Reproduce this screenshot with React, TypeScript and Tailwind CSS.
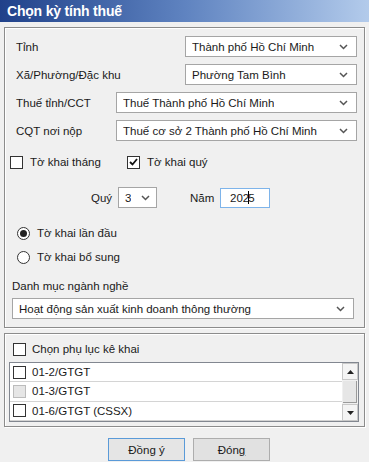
import type { ReactNode } from "react";

const FONT = { fontFamily: '"Liberation Sans", Arial, sans-serif' };

function Chevron() {
  return (
    <svg width="9" height="6" viewBox="0 0 9 6" className="shrink-0">
      <path d="M1 1 L4.5 4.5 L8 1" fill="none" stroke="#555" strokeWidth="1.5" />
    </svg>
  );
}

// Windows-style combo box: white field, thin gray frame, chevron on the right.
function Combo({ value, className = "" }: { value: string; className?: string }) {
  return (
    <div
      className={`flex h-[21px] items-center justify-between border border-[#a5a5a5] bg-white pl-[6px] pr-[8px] text-[#1a1a1a] ${className}`}
    >
      <span className="truncate">{value}</span>
      <Chevron />
    </div>
  );
}

function CheckBox({ checked = false, disabled = false }: { checked?: boolean; disabled?: boolean }) {
  return (
    <span
      className={`flex h-[13px] w-[13px] shrink-0 items-center justify-center border ${
        disabled ? "border-[#bcbcbc] bg-[#e6e6e6]" : "border-[#333] bg-white"
      }`}
    >
      {checked && (
        <svg width="9" height="8" viewBox="0 0 9 8">
          <path d="M1 4 L3.5 6.5 L8 1" fill="none" stroke="#111" strokeWidth="1.8" />
        </svg>
      )}
    </span>
  );
}

function Radio({ checked = false }: { checked?: boolean }) {
  return (
    <span className="flex h-[13px] w-[13px] shrink-0 items-center justify-center rounded-full border border-[#333] bg-white">
      {checked && <span className="h-[7px] w-[7px] rounded-full bg-[#222]" />}
    </span>
  );
}

function GroupBox({ children, className = "" }: { children: ReactNode; className?: string }) {
  return (
    <div className={`border border-[#8c8c8c] shadow-[1px_1px_0_#fff,inset_1px_1px_0_#fff] ${className}`}>
      {children}
    </div>
  );
}

const phuLuc = [
  { name: "01-2/GTGT", disabled: false },
  { name: "01-3/GTGT", disabled: true },
  { name: "01-6/GTGT (CSSX)", disabled: false },
];

export default function App() {
  return (
    <div
      className="h-[462px] w-[369px] overflow-hidden bg-[#f0f0f0] text-[11.5px] leading-[14px] text-[#1a1a1a]"
      style={FONT}
    >
      {/* title bar */}
      <div className="flex h-[22px] items-center bg-gradient-to-r from-[#20418a] via-[#5f83c0] to-[#b3cbeb] pl-[7px]">
        <span className="text-[14px] font-bold tracking-[-0.2px] text-white">Chọn kỳ tính thuế</span>
      </div>

      <div className="px-[4px] pt-[5px]">
        {/* --- kỳ tính thuế --- */}
        <GroupBox className="pb-[8px] pt-[8px]">
          <div className="flex items-center pl-[11px] pr-[7px]">
            <span className="flex-1">Tỉnh</span>
            <Combo value="Thành phố Hồ Chí Minh" className="w-[172px]" />
          </div>
          <div className="mt-[7px] flex items-center pl-[11px] pr-[7px]">
            <span className="flex-1">Xã/Phường/Đặc khu</span>
            <Combo value="Phường Tam Bình" className="w-[172px]" />
          </div>
          <div className="mt-[7px] flex items-center pl-[11px] pr-[7px]">
            <span className="w-[100px]">Thuế tỉnh/CCT</span>
            <Combo value="Thuế Thành phố Hồ Chí Minh" className="flex-1" />
          </div>
          <div className="mt-[7px] flex items-center pl-[11px] pr-[7px]">
            <span className="w-[100px]">CQT nơi nộp</span>
            <Combo value="Thuế cơ sở 2 Thành phố Hồ Chí Minh" className="flex-1" />
          </div>

          <div className="mt-[14px] flex items-center pl-[5px]">
            <label className="flex w-[117px] items-center gap-[7px]">
              <CheckBox />
              Tờ khai tháng
            </label>
            <label className="flex items-center gap-[7px]">
              <CheckBox checked />
              Tờ khai quý
            </label>
          </div>

          <div className="mt-[18px] flex items-center pl-[86px]">
            <span className="w-[27px]">Quý</span>
            <Combo value="3" className="w-[39px] !pr-[6px]" />
            <span className="ml-[33px] w-[30px]">Năm</span>
            <div className="flex h-[20px] w-[50px] items-center border border-[#7eb4ea] bg-white pl-[9px]">
              <span>202</span>
              <span className="mx-[-1px] h-[13px] w-px bg-black" />
              <span>5</span>
            </div>
          </div>

          <label className="mt-[18px] flex items-center gap-[7px] pl-[12px]">
            <Radio checked />
            Tờ khai lần đầu
          </label>
          <label className="mt-[10px] flex items-center gap-[7px] pl-[12px]">
            <Radio />
            Tờ khai bổ sung
          </label>

          <div className="mt-[15px] pl-[7px]">Danh mục ngành nghề</div>
          <div className="mt-[5px] pl-[7px] pr-[10px]">
            <Combo value="Hoạt động sản xuất kinh doanh thông thường" />
          </div>
        </GroupBox>

        {/* --- phụ lục --- */}
        <GroupBox className="mt-[5px] pb-[4px] pt-[8px]">
          <label className="flex items-center gap-[6px] pl-[8px]">
            <CheckBox />
            Chọn phụ lục kê khai
          </label>
          <div className="ml-[4px] mr-[5px] mt-[6px] flex h-[60px] border border-[#828790] bg-white">
            <div className="flex-1">
              {phuLuc.map((p) => (
                <div key={p.name} className="flex h-[19.3px] items-center gap-[6px] border-b border-[#d4d4d4] pl-[3px]">
                  <CheckBox disabled={p.disabled} />
                  {p.name}
                </div>
              ))}
            </div>
            {/* scrollbar */}
            <div className="flex w-[16px] flex-col bg-[#f0f0f0]">
              <div className="flex h-[17px] items-center justify-center border border-[#c8c8c8] bg-[#f4f4f4]">
                <svg width="7" height="4" viewBox="0 0 7 4">
                  <path d="M0 4 L3.5 0 L7 4 Z" fill="#222" />
                </svg>
              </div>
              <div className="mx-px my-px flex-1 border-b border-r border-[#9a9a9a] bg-[#e6e6e6]" />
              <div className="flex h-[17px] items-center justify-center border border-[#c8c8c8] bg-[#f4f4f4]">
                <svg width="7" height="4" viewBox="0 0 7 4">
                  <path d="M0 0 L3.5 4 L7 0 Z" fill="#222" />
                </svg>
              </div>
            </div>
          </div>
        </GroupBox>

        <div className="mt-[11px] flex justify-center gap-[8px] pl-[9px]">
          <button className="flex h-[23px] w-[77px] items-center justify-center border border-[#5a9ad8] bg-[#e5e5e5]">
            <span>
              Đồn<span className="underline">g</span> ý
            </span>
          </button>
          <button className="flex h-[23px] w-[77px] items-center justify-center border border-[#adadad] bg-[#e1e1e1]">
            <span>
              Đón<span className="underline">g</span>
            </span>
          </button>
        </div>
      </div>
    </div>
  );
}
